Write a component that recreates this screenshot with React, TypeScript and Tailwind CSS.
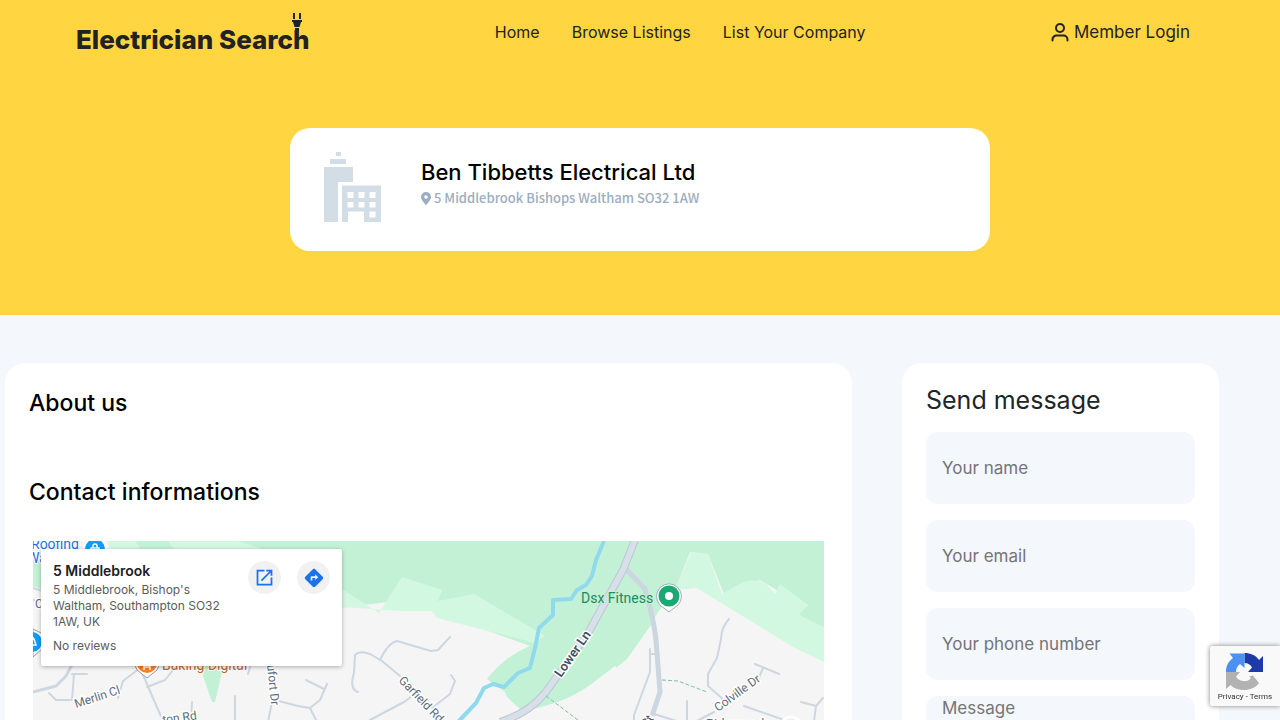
import React from 'react';

const navLinks = ['Home', 'Browse Listings', 'List Your Company'];

const fields = [
  { name: 'name', type: 'text', placeholder: 'Your name' },
  { name: 'email', type: 'email', placeholder: 'Your email' },
  { name: 'phone', type: 'tel', placeholder: 'Your phone number' },
];

function PlugIcon() {
  return (
    <svg className="absolute right-[6px] top-[-11px] w-3 h-[18px]" viewBox="0 0 12 18" fill="#222" aria-hidden="true">
      <path d="M2 0h2v6H2zM8 0h2v6H8zM1 7h10v2h-1l-1.500 5h-5L2 9H1zM4 15h4v3H4z" />
    </svg>
  );
}

function BuildingIcon() {
  return (
    <svg className="w-[58px] h-[71px] shrink-0" viewBox="0 0 58 71" fill="#d2dde5" aria-hidden="true">
      <path d="M12 0h5v4h-5zM6 7h16v5H6zM0 15h29v15H14v40H0z" />
      <path
        fillRule="evenodd"
        d="M18 33.500h39V70H40V59.500H24V70h-6zM23.500 40v6h6v-6zM34.500 40v6h6v-6zM45.500 40v6h6v-6zM23.500 50v5.500h6V50zM34.500 50v5.500h6V50zM45.500 50v5.500h6V50zM45.500 59.500v6h6v-6z"
      />
    </svg>
  );
}

function PinIcon() {
  return (
    <svg className="w-[10px] h-[13px] shrink-0" viewBox="0 0 10 13" fill="#9dadbf" aria-hidden="true">
      <path
        fillRule="evenodd"
        d="M5 0a5 5 0 0 1 5 5c0 2.600-3 5.600-4.300 7.600a.8.8 0 0 1-1.400 0C3 10.600 0 7.600 0 5a5 5 0 0 1 5-5zm0 3.200a1.800 1.800 0 1 0 0 3.600 1.800 1.800 0 0 0 0-3.600z"
      />
    </svg>
  );
}

function UserIcon() {
  return (
    <svg className="w-[18px] h-[19px]" viewBox="0 0 18 19" fill="none" stroke="#222" strokeWidth="2" strokeLinecap="round" aria-hidden="true">
      <circle cx="9" cy="5" r="4" />
      <path d="M1.500 17.500v-1a4 4 0 0 1 4-4h7a4 4 0 0 1 4 4v1" />
    </svg>
  );
}

function Header() {
  return (
    <header className="flex items-center justify-between h-16 pl-[76px] pr-[90px] text-[#222]">
      <a href="#" className="relative mt-4 text-[26px] leading-8 font-extrabold whitespace-nowrap">
        Electrician Search
        <PlugIcon />
      </a>
      <nav className="flex gap-8 text-base">
        {navLinks.map((link) => (
          <a key={link} href="#">
            {link}
          </a>
        ))}
      </nav>
      <a href="#" className="flex items-center gap-[5px] text-[17px] leading-6">
        <UserIcon />
        Member Login
      </a>
    </header>
  );
}

// Drawn in map units: one unit is one pixel at the default column width
function TownMap() {
  return (
    <svg
      className="block w-full h-[300px]"
      viewBox="33 541 791 300"
      preserveAspectRatio="xMinYMin slice"
      fontFamily="Roboto, sans-serif"
      aria-label="Map"
    >
      <rect x="33" y="541" width="791" height="300" fill="#f5f5f5" />

      {/* Parks and woodland */}
      <path
        fill="#c3f1d5"
        d="M135 541H824V634L797 615L808 605L780 592L760 580L724 594L708 554L690 552L675 590L658 612L651 625L627 659L617 667L615 666L590 685Q564 704 522 711L507 697L505 692L487 679Q505 656 530 646L402 600L341 608L240 580L140 549z"
      />
      <path fill="#d3f8e2" d="M107 541h28l6 9h-30zM168 541h70l30 10H175z" />
      <path fill="#d3f8e2" d="M342 589L379 613L402 577L442 590L438 601L474 594L545 636L535 643L437 618L432 611H400L342 607z" />
      <path fill="#d3f8e2" d="M675 590L691 552L708 554L722 594L743 582Q760 578 767 585L775 594L780 584L808 605L799 615L824 627V662L793 647L697 588z" />
      <path fill="#c3f1d5" d="M33 556L44 562V590L33 586zM199 664H224L215 702H212z" />

      {/* River */}
      <path
        fill="none"
        stroke="#90daee"
        strokeWidth="4"
        strokeLinejoin="round"
        d="M458 722L476 703L484 688L493 684L504 687L518 673L530 668L535 648L539 628L553 615V600L571 599L577 590L586 585L592 576L596 560L604 541"
      />

      {/* Residential roads */}
      <g fill="none" stroke="#cdd7e2" strokeWidth="2" strokeLinejoin="round" strokeLinecap="round">
        <path d="M33 692L56 686L66 676L74 661" strokeWidth="3" />
        <path d="M72 674h15M74 674L72 700H56L49 693" />
        <path d="M118 698L123 681L140 668L153 698L166 728M147 687L165 680L173 670M192 702L191 725M235 696V722M252 660L248 674" />
        <path d="M275 700L298 706L310 708L320 700L327 684M306 680L324 689M310 708L317 722M272 702L268 722" />
        <path d="M380 660Q388 643 397 641L431 651L438 650L450 637" />
        <path d="M358 692Q349 689 354 673L355 655Q360 650 370 654L382 661L400 676M370 720L404 702L412 696M432 708L450 694L455 681L451 675" />
        <path d="M650 649V672L634 715V722M650 654H657M687 701V722M654 714L680 722" />
        <path d="M729 619Q721 628 721 639L717 658L708 674V686L716 693L725 701M744 706L790 722M695 722L714 712M755 664L779 674M763 668L758 680M801 702L816 706L823 698M816 706L814 722" />
        <path d="M33 588L42 591M33 600L42 601" />
      </g>
      <path d="M626 569L645 589Q654 620 656 640L660 692L652 716" fill="none" stroke="#cbd6e0" strokeWidth="5" />
      <path d="M635 540L623 570L587 635L545 693Q529 713 500 722" fill="none" stroke="#bdc8d4" strokeWidth="8" />
      <path d="M635 540L623 570L587 635L545 693Q529 713 500 722" fill="none" stroke="#d7dfe8" strokeWidth="6" />
      <path d="M546 696L578 720M662 680L678 681L707 692" fill="none" stroke="#82c0a0" strokeWidth="1" strokeDasharray="4 2" />

      {/* Labels */}
      <g fill="#5d6b78" stroke="#fff" strokeWidth="3" paintOrder="stroke" fontSize="12">
        <text transform="translate(76 708) rotate(-18)">Merlin Cl</text>
        <text transform="translate(163 724) rotate(-8)">ton Rd</text>
        <text transform="translate(267 665) rotate(84)">ufort Dr</text>
        <text transform="translate(398 681) rotate(46)">Garfield Rd</text>
        <text transform="translate(718 712) rotate(-36)">Colville Dr</text>
        <text transform="translate(647 728) rotate(-52)" fill="#3f4f61" fontWeight="500">St</text>
        <text x="706" y="728" fontSize="13">Ridgemede</text>
        <text transform="translate(561 678) rotate(-55)" fill="#3f4f61" fontWeight="600" fontSize="13">Lower Ln</text>
        <text x="35" y="608">C</text>
      </g>
      <g stroke="#fff" strokeWidth="2" paintOrder="stroke" fontSize="14">
        <text x="31" y="549" fill="#1a73e8">Roofing</text>
        <text x="27" y="563" fill="#1a73e8">Wa</text>
        <text x="162" y="670" fill="#c5651c">Baking Digital</text>
        <text x="581" y="603" fill="#1f8a60" stroke="#c3f1d5">Dsx Fitness</text>
      </g>

      {/* Place markers */}
      <path d="M669 612L660 605A12.500 12.500 0 1 1 678 605z" fill="#fff" stroke="#a3adb0" strokeWidth="1" strokeLinejoin="round" />
      <circle cx="669" cy="596" r="10.500" fill="#1aa873" />
      <circle cx="669" cy="596" r="4" fill="#fff" />
      <path d="M147 678L137 670A12 12 0 1 1 157 670z" fill="#fff" stroke="#999" strokeLinejoin="round" />
      <circle cx="147" cy="663" r="10" fill="#fb8024" />
      <path d="M144 660v10M150 660v10M144 667h6" stroke="#fff" strokeWidth="1.500" fill="none" />
      <circle cx="95" cy="549" r="12" fill="#fff" />
      <circle cx="95" cy="549" r="10" fill="#109cf9" />
      <path d="M91 548h8v5h-8zM93 548v-2a2 2 0 0 1 4 0v2" fill="none" stroke="#fff" strokeWidth="1.500" />
      <path d="M33 657L43 648V634L33 629z" fill="#fff" stroke="#999" strokeLinejoin="round" />
      <circle cx="32" cy="642" r="10" fill="#109cf9" />
      <path d="M30 645h6l-2-6h-4M33 639v-2" fill="none" stroke="#fff" strokeWidth="1.500" />
      <circle cx="791" cy="728" r="11" fill="#e8edf0" stroke="#fff" strokeWidth="3" />
    </svg>
  );
}

function MapPopup() {
  return (
    <div className="absolute left-2 top-2 w-[301px] h-[117px] px-3 pt-3 bg-white rounded-xs shadow-[0_1px_4px_rgba(0,0,0,0.3)] flex justify-between">
      <div className="w-[172px] text-xs text-[#5b5b5b] whitespace-nowrap">
        <h3 className="text-sm font-semibold text-[#202124]">5 Middlebrook</h3>
        <p className="mt-px">
          5 Middlebrook, Bishop's
          <br />
          Waltham, Southampton SO32
          <br />
          1AW, UK
        </p>
        <p className="mt-2">No reviews</p>
      </div>
      <div className="flex gap-4">
        <button aria-label="Open in Maps" className="w-[33px] h-[33px] rounded-full bg-[#f1f1f1] flex items-center justify-center">
          <svg className="w-[21px] h-[21px]" viewBox="0 0 24 24" fill="#1a73e8">
            <path d="M19 19H5V5h7V3H3v18h18v-9h-2zM14 3v2h3.590l-9.830 9.830 1.410 1.410L19 6.410V10h2V3z" />
          </svg>
        </button>
        <button aria-label="Directions" className="w-[33px] h-[33px] rounded-full bg-[#f1f1f1] flex items-center justify-center">
          <svg className="w-5 h-5" viewBox="0 0 24 24" fill="#1a73e8">
            <path d="M22.430 10.590l-9.010-9.010c-.75-.75-2.070-.76-2.830 0l-9 9c-.78.780-.78 2.040 0 2.820l9 9c.39.390.9.590 1.410.59.510 0 1.020-.2 1.410-.590l8.990-8.990c.79-.76.8-2.020.03-2.820zM13.500 14.500V12H10v3H8v-4c0-.55.450-1 1-1h4.500V7.500L17 11l-3.500 3.500z" />
          </svg>
        </button>
      </div>
    </div>
  );
}

function RecaptchaBadge() {
  return (
    <div className="fixed right-0 bottom-[14px] w-[70px] h-[60px] rounded-l-xs bg-[#f9f9f9] shadow-[0_0_5px_gray] flex flex-col items-center pt-[7px]">
      <svg className="w-[38px] h-[38px]" viewBox="0 0 38 38" aria-hidden="true">
        <path fill="#1c3aa9" d="M18.500 0c6 0 11 2 14.500 7l4-4v16H22l4-4.500c-1.500-3-4-4.500-7.500-4.500z" />
        <path fill="#4a90f5" d="M0 19C0 13 2 9 7 5L3.500 0.500h15V15L14 11c-3 2-4 5-4 8z" />
        <path fill="#b2b2b2" d="M0 19h14l-4 4.500c2 4.500 11 7 15 1.500l-2-1.500 4-1 6 7.500C27 39 11 39 4.500 32L0 36z" />
      </svg>
      <p className="mt-px text-[8px] leading-[10px] font-[Roboto,sans-serif] text-[#333] whitespace-nowrap">
        <a href="#">Privacy</a> - <a href="#">Terms</a>
      </p>
    </div>
  );
}

export default function App() {
  return (
    <div className="min-h-screen bg-[#f4f7fc] font-[Inter,sans-serif] overflow-x-hidden">
      <div className="bg-[#ffd642] pb-16">
        <Header />
        <section className="mx-auto mt-16 w-full max-w-[700px] h-[123px] rounded-[20px] bg-white flex items-start gap-[39px] pl-[34px] pt-6">
          <BuildingIcon />
          <div className="pt-[6px]">
            <h1 className="text-[22px] leading-7 font-medium text-black">Ben Tibbetts Electrical Ltd</h1>
            <p className="flex items-center gap-[3px] text-[13px] leading-6 font-medium text-[#9dadbf] font-['Noto_Sans_CJK_SC',sans-serif]">
              <PinIcon />5 Middlebrook Bishops Waltham SO32 1AW
            </p>
          </div>
        </section>
      </div>

      <main className="flex items-start gap-[50px] pl-[5px] pr-[61px] pt-12 pb-12">
        <section className="flex-1 min-w-0 rounded-[20px] bg-white px-6 pt-6 pb-6 text-black">
          <h2 className="text-[23px] leading-8 font-medium">About us</h2>
          <h2 className="mt-[57px] text-[23px] leading-8 font-medium">Contact informations</h2>
          <div className="relative mx-1 mt-[33px] overflow-hidden">
            <TownMap />
            <MapPopup />
          </div>
        </section>

        <aside className="w-[317px] shrink-0 rounded-[20px] bg-white px-6 pt-[21px] pb-6">
          <h2 className="text-[25px] leading-8 text-[#212529]">Send message</h2>
          <form className="mt-4 flex flex-col gap-4">
            {fields.map((field) => (
              <input
                key={field.name}
                name={field.name}
                type={field.type}
                placeholder={field.placeholder}
                aria-label={field.placeholder}
                className="w-full h-[72px] px-4 rounded-xl bg-[#f4f7fc] text-[17px] leading-6 placeholder:text-[#757575]"
              />
            ))}
            <textarea
              name="message"
              placeholder="Message"
              aria-label="Message"
              className="w-full h-[120px] px-4 rounded-xl bg-[#f4f7fc] text-[17px] leading-6 placeholder:text-[#757575] resize-none"
            />
          </form>
        </aside>
      </main>

      <RecaptchaBadge />
    </div>
  );
}
